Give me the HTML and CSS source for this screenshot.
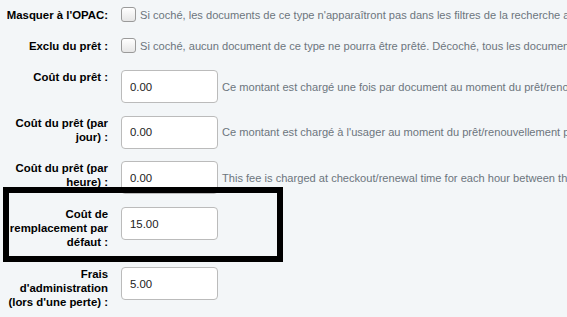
FILE: index.html
```html
<!DOCTYPE html>
<html>
<head>
    <title>Type de document</title>
    <link rel="stylesheet" href="styles.css">
</head>
<body>
    <fieldset class="rows">
        <ol>
            <li class="check-row">
                <label for="hideopac">Masquer à l'OPAC:</label>
                <div class="field">
                    <input type="checkbox" id="hideopac">
                    <span class="hint">Si coché, les documents de ce type n'apparaîtront pas dans les filtres de la recherche avancée de l'OPAC</span>
                </div>
            </li>
            <li class="check-row">
                <label for="notforloan">Exclu du prêt :</label>
                <div class="field">
                    <input type="checkbox" id="notforloan">
                    <span class="hint">Si coché, aucun document de ce type ne pourra être prêté. Décoché, tous les documents de ce type pourront être prêtés</span>
                </div>
            </li>
            <li>
                <label for="rentalcharge">Coût du prêt :</label>
                <div class="field">
                    <input type="text" id="rentalcharge" value="0.00">
                    <span class="hint">Ce montant est chargé une fois par document au moment du prêt/renouvellement</span>
                </div>
            </li>
            <li>
                <label for="rentalcharge_daily">Coût du prêt (par jour) :</label>
                <div class="field">
                    <input type="text" id="rentalcharge_daily" value="0.00">
                    <span class="hint">Ce montant est chargé à l'usager au moment du prêt/renouvellement pour chaque jour</span>
                </div>
            </li>
            <li>
                <label for="rentalcharge_hourly">Coût du prêt (par heure) :</label>
                <div class="field">
                    <input type="text" id="rentalcharge_hourly" value="0.00">
                    <span class="hint">This fee is charged at checkout/renewal time for each hour between the checkout and the due date</span>
                </div>
            </li>
            <li class="tall-row">
                <div class="highlight"></div>
                <label for="defaultreplacecost">Coût de remplacement par défaut :</label>
                <div class="field">
                    <input type="text" id="defaultreplacecost" value="15.00">
                </div>
            </li>
            <li>
                <label for="processfee">Frais d'administration (lors d'une perte) :</label>
                <div class="field">
                    <input type="text" id="processfee" value="5.00">
                </div>
            </li>
        </ol>
    </fieldset>
</body>
</html>
```

FILE: styles.css
```css
body {
    margin: 0;
    background-color: #f3f6f8;
    font-family: "Liberation Sans", Arial, sans-serif;
    font-size: 11.4px;
    color: #000;
    overflow: hidden;
}

.rows {
    border: none;
    margin: 0;
    padding: 7px 0 0 4px;
}

.rows ol {
    list-style: none;
    margin: 0;
    padding: 0;
}

.rows li {
    display: flex;
    align-items: flex-start;
    padding-bottom: 12.7px;
    white-space: nowrap;
}

.rows li.check-row {
    padding-bottom: 15px;
}

.rows li.check-row + li:not(.check-row) {
    margin-top: 1px;
}

.rows li.tall-row {
    position: relative;
    padding-bottom: 18px;
}

.rows label {
    flex: none;
    width: 104px;
    margin-right: 13px;
    text-align: right;
    font-weight: bold;
    line-height: 14px;
    white-space: normal;
}

.check-row label {
    line-height: 16px;
}

.field {
    display: flex;
    align-items: center;
}

.hint {
    color: #6c757d;
    font-size: 11.1px;
    margin-left: 4px;
}

input[type="text"] {
    box-sizing: border-box;
    width: 97px;
    height: 33px;
    padding: 0 8px;
    border: 1px solid #bbb;
    border-radius: 4px;
    background: #fff;
    font-family: "Liberation Sans", Arial, sans-serif;
    font-size: 11.4px;
    color: #222;
}

input[type="checkbox"] {
    appearance: none;
    box-sizing: border-box;
    width: 15px;
    height: 15px;
    margin: 0;
    border: 1px solid #9a9a9a;
    border-radius: 3px;
    background: linear-gradient(#ffffff, #e6e6e6);
}

.highlight {
    position: absolute;
    left: -1px;
    top: -20px;
    width: 280px;
    height: 75px;
    box-sizing: border-box;
    border: 6px solid #000;
}
```
